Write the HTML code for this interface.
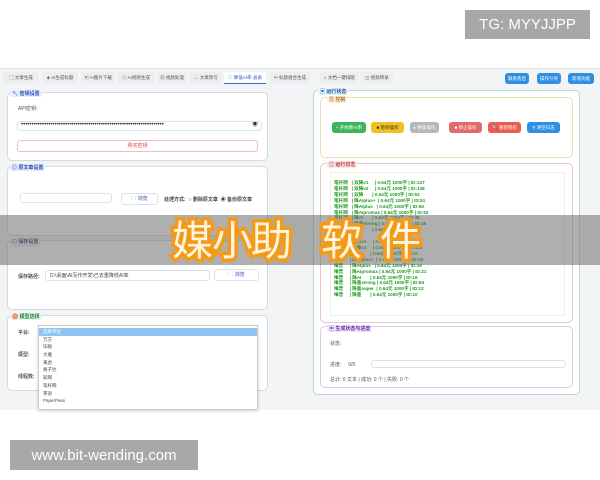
<!DOCTYPE html>
<html><head><meta charset="utf-8"><style>
*{box-sizing:border-box;margin:0;padding:0}
body{width:600px;height:480px;background:#fff;position:relative;overflow:hidden;font-family:"Liberation Sans","Noto Sans CJK SC",sans-serif;font-size:5px;color:#333}
.abs{position:absolute}
.badge{background:#a8a8a8;color:#fff;font-size:15px;display:flex;align-items:center;justify-content:center}
.win{left:0;top:68px;width:600px;height:342px;background:#f3f4f6;border-top:1px solid #e2e2e2}
.tab{top:72px;height:12px;font-size:4.5px;color:#555;display:flex;align-items:center;justify-content:center;background:#eceef1}
.panel{background:#fff;border:1px solid #cfdbe0;border-radius:5px}
.lbl{font-size:5px;font-weight:bold;padding:0 2px;border-radius:2px}
.btn{border-radius:3px;color:#fff;font-size:4.5px;display:flex;align-items:center;justify-content:center}
.inp{background:#fff;border:1px solid #dde2e6;border-radius:3px}
.log{font-size:4.6px;color:#1a9a1a;font-weight:bold;line-height:5.9px;white-space:pre}
.dd div{height:7.7px;line-height:7.7px;padding-left:4px;font-size:4.5px;color:#444}
.big{position:absolute;top:212px;font-size:41px;line-height:50px;color:#fff4dc;-webkit-text-stroke:7px #f39a1a;paint-order:stroke fill;font-family:'Noto Sans CJK SC',sans-serif}
</style></head><body>
<div class="abs badge" style="left:465px;top:10px;width:125px;height:29px">TG: MYYJJPP</div>
<div class="abs badge" style="left:10px;top:440px;width:188px;height:30px">www.bit-wending.com</div>

<div class="abs win"></div>
<div class="abs tab" style="left:3px;width:36px">▢ 文章生成</div>
<div class="abs tab" style="left:42px;width:36px">◈ AI生成标题</div>
<div class="abs tab" style="left:81px;width:34px">▣ AI图片下载</div>
<div class="abs tab" style="left:118px;width:36px">▤ AI视频生成</div>
<div class="abs tab" style="left:157px;width:30px">▦ 视频处理</div>
<div class="abs tab" style="left:190px;width:32px">↔ 文章改写</div>
<div class="abs tab" style="left:224px;width:42px;background:#fff;color:#2255aa;border-bottom:1px solid #2a6fd0">♡ 降低AI率·总表</div>
<div class="abs tab" style="left:270px;width:40px">⚯ 标题组合生成</div>
<div class="abs tab" style="left:320px;width:38px">♫ 文档一键排版</div>
<div class="abs tab" style="left:361px;width:32px">◫ 视频转录</div>
<div class="abs btn" style="left:505px;top:73px;width:24px;height:11px;background:#2f8fe0">联系售后</div>
<div class="abs btn" style="left:537px;top:73px;width:24px;height:11px;background:#2f8fe0">操作引导</div>
<div class="abs btn" style="left:568px;top:73px;width:26px;height:11px;background:#2f8fe0">新增功能</div>

<div class="abs panel" style="left:7px;top:92px;width:261px;height:69px"></div>
<div class="abs lbl" style="left:10px;top:90px;color:#2b4bb0;background:#e6ebff">🔧 密钥设置</div>
<div class="abs" style="left:18px;top:105px;color:#555">API密钥:</div>
<div class="abs inp" style="left:17px;top:121px;width:245px;height:10px;font-size:6px;line-height:7px;padding-left:3px;color:#333;overflow:hidden">••••••••••••••••••••••••••••••••••••••••••••••••••••••••••••••••••••<span style="position:absolute;right:3px">◉</span></div>
<div class="abs inp" style="left:17px;top:140px;width:241px;height:12px;color:#e0443c;text-align:center;line-height:11px;border-color:#e8c0c0">购买密钥</div>

<div class="abs panel" style="left:7px;top:166px;width:261px;height:70px"></div>
<div class="abs lbl" style="left:10px;top:164px;color:#2b4bb0;background:#e6ebff">◎ 原文章设置</div>
<div class="abs inp" style="left:20px;top:193px;width:92px;height:10px"></div>
<div class="abs inp" style="left:121px;top:193px;width:37px;height:12px;text-align:center;line-height:11px;color:#2255aa">🗀 浏览</div>
<div class="abs" style="left:164px;top:196px;font-weight:bold;color:#444">处理方式: &nbsp;○ 删除原文章 &nbsp;◉ 备份原文章</div>

<div class="abs panel" style="left:7px;top:240px;width:261px;height:70px"></div>
<div class="abs lbl" style="left:10px;top:238px;color:#336;background:#e8f0f4">🗀 保存设置</div>
<div class="abs" style="left:18px;top:273px;font-weight:bold;color:#555">保存路径:</div>
<div class="abs inp" style="left:45px;top:270px;width:165px;height:11px;padding-left:4px;line-height:10px;color:#444">D:\桌面\AI写作开发\已去重降低AI率</div>
<div class="abs inp" style="left:214px;top:269px;width:45px;height:12px;text-align:center;line-height:11px;color:#2255aa">🗀 浏览</div>

<div class="abs panel" style="left:7px;top:315px;width:261px;height:76px"></div>
<div class="abs lbl" style="left:10px;top:313px;color:#1a7a3a;background:#e4f6ea">♉ 模型选择</div>
<div class="abs" style="left:18px;top:329px;font-weight:bold;color:#555">平台:</div>
<div class="abs" style="left:18px;top:351px;font-weight:bold;color:#555">模型:</div>
<div class="abs" style="left:18px;top:373px;font-weight:bold;color:#555">线程数:</div>
<div class="abs dd" style="left:38px;top:325px;width:220px;height:85px;background:#fff;border:1px solid #ccc;box-shadow:0 1px 3px rgba(0,0,0,.2);overflow:hidden;padding-top:2px">
<div style="background:#8fc4f2;color:#fff">选择平台</div><div>万方</div><div>毕眼</div><div>大雅</div><div>来虎</div><div>格子达</div><div>知网</div><div>笔杆网</div><div>茶语</div><div>PaperPass</div>
</div>

<div class="abs panel" style="left:313px;top:90px;width:267px;height:305px;border-color:#b8d8d4"></div>
<div class="abs lbl" style="left:318px;top:88px;color:#2255aa;background:#e8f6f4">▣ 运行状态</div>
<div class="abs panel" style="left:320px;top:97px;width:253px;height:61px;border-color:#f0dcb4"></div>
<div class="abs lbl" style="left:327px;top:96px;color:#b07020;background:#fbf0dc">▦ 控制</div>
<div class="abs btn" style="left:332px;top:122px;width:34px;height:11px;background:#3ab55a">+ 开始降AI率</div>
<div class="abs btn" style="left:371px;top:122px;width:33px;height:11px;background:#efc21f;color:#333">■ 暂停操作</div>
<div class="abs btn" style="left:410px;top:122px;width:29px;height:11px;background:#b5b8bb">▸ 继续操作</div>
<div class="abs btn" style="left:449px;top:122px;width:33px;height:11px;background:#e26a6a">■ 停止操作</div>
<div class="abs btn" style="left:488px;top:122px;width:33px;height:11px;background:#ec5a50">🔍 重新授权</div>
<div class="abs btn" style="left:527px;top:122px;width:33px;height:11px;background:#2f8fe0">⚲ 清空日志</div>

<div class="abs panel" style="left:320px;top:163px;width:253px;height:160px;border-color:#e6c6c6"></div>
<div class="abs lbl" style="left:327px;top:161px;color:#c03030;background:#fbe6e6">▤ 运行日志</div>
<div class="abs" style="left:330px;top:172px;width:235px;height:144px;border:1px solid #eee;background:#fff"></div>
<div class="abs log" style="left:334px;top:180px">笔杆网   | 双降v1     | 0.64元 1000字 | ID:137
笔杆网   | 双降v2     | 0.64元 1000字 | ID:138
笔杆网   | 双降       | 0.64元 1000字 | ID:53
笔杆网   | 降AIplus+  | 0.64元 1000字 | ID:51
笔杆网   | 降AIplus   | 0.64元 1000字 | ID:50
笔杆网   | 降AIpromax | 0.64元 1000字 | ID:52
笔杆网   | 降AI       | 0.64元 1000字 | ID:48
笔杆网   | 降重strong | 0.64元 1000字 | ID:45
笔杆网   | 降重       | 0.64元 1000字 | ID:80

维普     | 双降v1     | 0.64元 1000字 | ID:115
维普     | 双降v2     | 0.64元 1000字 | ID:116
维普     | 双降       | 0.64元 1000字 | ID:22
维普     | 降AIplus+  | 0.64元 1000字 | ID:20
维普     | 降AIplus   | 0.64元 1000字 | ID:19
维普     | 降AIpromax | 0.64元 1000字 | ID:21
维普     | 降AI       | 0.64元 1000字 | ID:16
维普     | 降重strong | 0.64元 1000字 | ID:84
维普     | 降重super  | 0.64元 1000字 | ID:12
维普     | 降重       | 0.64元 1000字 | ID:10</div>

<div class="abs panel" style="left:320px;top:326px;width:253px;height:62px;border-color:#d4cce8"></div>
<div class="abs lbl" style="left:327px;top:325px;color:#6030a0;background:#efe6fb">▣ 生成状态与进度</div>
<div class="abs" style="left:330px;top:340px;color:#555">状态:</div>
<div class="abs" style="left:330px;top:361px;color:#555">进度: &nbsp;&nbsp;&nbsp; 0/0</div>
<div class="abs inp" style="left:371px;top:360px;width:195px;height:8px"></div>
<div class="abs" style="left:330px;top:376px;color:#555">总计: 0 文本 | 成功: 0 个 | 失败: 0 个</div>

<div class="abs" style="left:0;top:215px;width:600px;height:50px;background:rgba(110,110,110,.55)"></div>
<div class="big" style="left:172px">媒</div>
<div class="big" style="left:212px">小</div>
<div class="big" style="left:251px">助</div>
<div class="big" style="left:321px">软</div>
<div class="big" style="left:380px">件</div>
</body></html>
